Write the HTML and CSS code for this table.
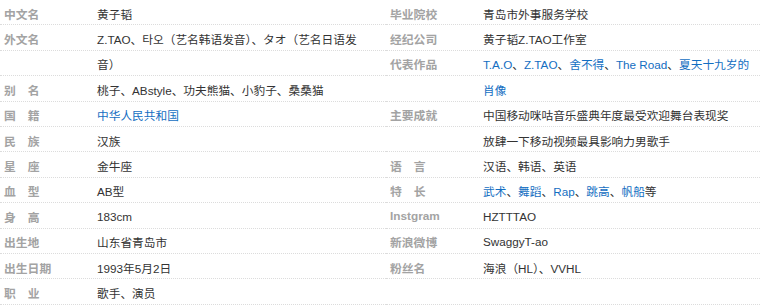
FILE: index.html
```html
<!DOCTYPE html>
<html lang="zh-CN">
<head>
<meta charset="utf-8">
<title>黄子韬 基本信息</title>
<link rel="stylesheet" href="styles.css">
</head>
<body>
<div class="info">
  <dl class="col col-left">
    <div class="row"><dt>中文名</dt><dd>黄子韬</dd></div>
    <div class="row"><dt>外文名</dt><dd>Z.TAO、타오（艺名韩语发音）、タオ（艺名日语发</dd></div>
    <div class="row"><dt></dt><dd>音）</dd></div>
    <div class="row"><dt class="two">别名</dt><dd>桃子、ABstyle、功夫熊猫、小豹子、桑桑猫</dd></div>
    <div class="row"><dt class="two">国籍</dt><dd><a href="#">中华人民共和国</a></dd></div>
    <div class="row"><dt class="two">民族</dt><dd>汉族</dd></div>
    <div class="row"><dt class="two">星座</dt><dd>金牛座</dd></div>
    <div class="row"><dt class="two">血型</dt><dd>AB型</dd></div>
    <div class="row"><dt class="two">身高</dt><dd>183cm</dd></div>
    <div class="row"><dt>出生地</dt><dd>山东省青岛市</dd></div>
    <div class="row"><dt>出生日期</dt><dd>1993年5月2日</dd></div>
    <div class="row"><dt class="two">职业</dt><dd>歌手、演员</dd></div>
  </dl>
  <dl class="col col-right">
    <div class="row"><dt>毕业院校</dt><dd>青岛市外事服务学校</dd></div>
    <div class="row"><dt>经纪公司</dt><dd>黄子韬Z.TAO工作室</dd></div>
    <div class="row"><dt>代表作品</dt><dd><a href="#">T.A.O</a>、<a href="#">Z.TAO</a>、<a href="#">舍不得</a>、<a href="#">The Road</a>、<a href="#">夏天十九岁的</a></dd></div>
    <div class="row"><dt></dt><dd><a href="#">肖像</a></dd></div>
    <div class="row"><dt>主要成就</dt><dd>中国移动咪咕音乐盛典年度最受欢迎舞台表现奖</dd></div>
    <div class="row"><dt></dt><dd>放肆一下移动视频最具影响力男歌手</dd></div>
    <div class="row"><dt class="two">语言</dt><dd>汉语、韩语、英语</dd></div>
    <div class="row"><dt class="two">特长</dt><dd><a href="#">武术</a>、<a href="#">舞蹈</a>、<a href="#">Rap</a>、<a href="#">跳高</a>、<a href="#">帆船</a>等</dd></div>
    <div class="row"><dt>Instgram</dt><dd>HZTTTAO</dd></div>
    <div class="row"><dt>新浪微博</dt><dd>SwaggyT-ao</dd></div>
    <div class="row"><dt>粉丝名</dt><dd>海浪（HL）、VVHL</dd></div>
    <div class="row"><dt></dt><dd></dd></div>
  </dl>
</div>
</body>
</html>
```
FILE: styles.css
```css
html, body {
  margin: 0;
  padding: 0;
  background: #fff;
}
body {
  font-family: "Liberation Sans", "Noto Sans CJK SC", sans-serif;
  font-size: 11.7px;
  color: #333;
}
.info {
  display: flex;
  width: 760px;
}
.col {
  margin: 0;
  padding: 0;
  display: flex;
  flex-direction: column;
}
.col-left {
  width: 386px;
}
.col-right {
  width: 374px;
}
.row {
  display: flex;
  align-items: center;
  box-sizing: border-box;
  height: 25.4px;
  border-bottom: 1px dotted #dcdcdc;
  padding-top: 2px;
}
dt {
  box-sizing: border-box;
  width: 97px;
  flex: none;
  padding-left: 4px;
  color: #a3a3a3;
  font-weight: bold;
  font-size: 11.8px;
  white-space: nowrap;
}
dt.two {
  letter-spacing: 12px;
}
dd {
  margin: 0;
  white-space: nowrap;
}
a {
  color: #136ec2;
  text-decoration: none;
}
```
